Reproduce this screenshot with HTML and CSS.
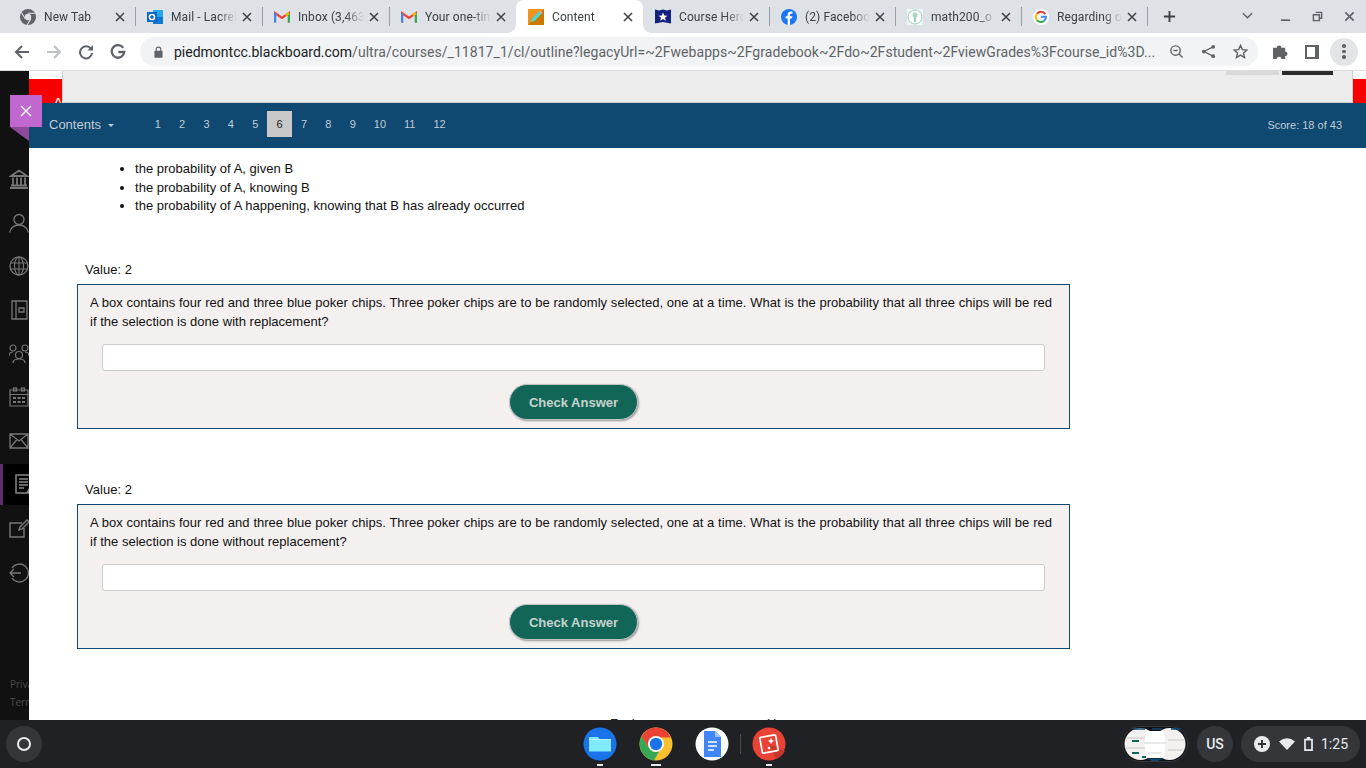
FILE: index.html
```html
<!DOCTYPE html>
<html lang="en">
<head>
<meta charset="utf-8">
<title>Content</title>
<link rel="stylesheet" href="styles.css">
</head>
<body>
<div class="tabstrip">
  <div class="tab"><svg class="fav" viewBox="0 0 16 16"><circle cx="8" cy="8" r="8" fill="#5f6368"/><circle cx="8" cy="8" r="3.2" fill="#dee1e6"/><path d="M8 4.200h7M5 9.500L1.500 3.500M10.800 10L7.200 15.800" stroke="#dee1e6" stroke-width="1.100"/></svg><span class="title">New Tab</span><svg class="x" viewBox="0 0 10 10"><path d="M1 1l8 8M9 1L1 9" stroke="#3c4043" stroke-width="1.500"/></svg></div>
  <div class="tab sep"><svg class="fav" viewBox="0 0 16 16"><rect x="6" y="1" width="10" height="14" fill="#28a8ea"/><rect x="6" y="8" width="10" height="7" fill="#0f78d4"/><rect x="0" y="3" width="10" height="10" fill="#0864c5"/><circle cx="5" cy="8" r="2.600" fill="none" stroke="#fff" stroke-width="1.500"/></svg><span class="title">Mail - Lacrei</span><svg class="x" viewBox="0 0 10 10"><path d="M1 1l8 8M9 1L1 9" stroke="#3c4043" stroke-width="1.500"/></svg></div>
  <div class="tab sep"><svg class="fav" viewBox="0 0 16 16"><path d="M1 13.500V4l7 5 7-5v9.500" fill="none" stroke="#ea4335" stroke-width="2.200"/><path d="M1.100 13.500V4" stroke="#4285f4" stroke-width="2.200"/><path d="M14.900 13.500V4" stroke="#34a853" stroke-width="2.200"/><path d="M14.900 4l-3 2.200" stroke="#fbbc04" stroke-width="2.200"/></svg><span class="title">Inbox (3,463)</span><svg class="x" viewBox="0 0 10 10"><path d="M1 1l8 8M9 1L1 9" stroke="#3c4043" stroke-width="1.500"/></svg></div>
  <div class="tab sep"><svg class="fav" viewBox="0 0 16 16"><path d="M1 13.500V4l7 5 7-5v9.500" fill="none" stroke="#ea4335" stroke-width="2.200"/><path d="M1.100 13.500V4" stroke="#4285f4" stroke-width="2.200"/><path d="M14.900 13.500V4" stroke="#34a853" stroke-width="2.200"/><path d="M14.900 4l-3 2.200" stroke="#fbbc04" stroke-width="2.200"/></svg><span class="title">Your one-time</span><svg class="x" viewBox="0 0 10 10"><path d="M1 1l8 8M9 1L1 9" stroke="#3c4043" stroke-width="1.500"/></svg></div>
  <div class="tab active"><svg class="fav" viewBox="0 0 16 16"><rect width="16" height="16" fill="#f0921e"/><path d="M0 16L16 0v16z" fill="#cc7700"/><path d="M3 13l1-3.500 7-7 2.500 2.500-7 7z" fill="#4fd8d0"/><path d="M11 2.500l2.500 2.500 1-1-2.500-2.500z" fill="#f4a6c8"/></svg><span class="title">Content</span><svg class="x" viewBox="0 0 10 10"><path d="M1 1l8 8M9 1L1 9" stroke="#3c4043" stroke-width="1.500"/></svg></div>
  <div class="tab tight"><svg class="fav" viewBox="0 0 16 16"><path d="M0 0.500l4 1 4-1 4 1 4-1v14l-8-1.500-8 1.500z" fill="#12207f"/><path d="M8 3.500l1.300 2.900 3.100.3-2.400 2 .8 3L8 10.100l-2.800 1.600.8-3-2.400-2 3.100-.3z" fill="#fff"/></svg><span class="title">Course Hero</span><svg class="x" viewBox="0 0 10 10"><path d="M1 1l8 8M9 1L1 9" stroke="#3c4043" stroke-width="1.500"/></svg></div>
  <div class="tab tight sep"><svg class="fav" viewBox="0 0 16 16"><circle cx="8" cy="8" r="8" fill="#1877f2"/><path d="M9 16V9.500h2l.4-2.300H9V6c0-.8.300-1.300 1.400-1.300h1.100V2.600C11 2.500 10.400 2.400 9.800 2.400 8 2.400 6.700 3.500 6.700 5.600v1.600H4.600v2.300h2.100V16z" fill="#fff"/></svg><span class="title">(2) Facebook</span><svg class="x" viewBox="0 0 10 10"><path d="M1 1l8 8M9 1L1 9" stroke="#3c4043" stroke-width="1.500"/></svg></div>
  <div class="tab tight sep"><svg class="fav" viewBox="0 0 16 16"><rect width="16" height="16" fill="#eef6f1"/><circle cx="8" cy="8" r="7" fill="#fff" stroke="#9ccdb8"/><path d="M8 13V7" stroke="#5aa88a" stroke-width="1.200"/><circle cx="8" cy="6" r="2.500" fill="#a5d6c0"/></svg><span class="title">math200_o</span><svg class="x" viewBox="0 0 10 10"><path d="M1 1l8 8M9 1L1 9" stroke="#3c4043" stroke-width="1.500"/></svg></div>
  <div class="tab tight sep"><svg class="fav" viewBox="0 0 16 16"><circle cx="8" cy="8" r="8" fill="#fff"/><path d="M12.300 5.200A5 5 0 0 0 4 4.900" fill="none" stroke="#ea4335" stroke-width="2"/><path d="M4 4.900a5 5 0 0 0 0 6.200" fill="none" stroke="#fbbc04" stroke-width="2"/><path d="M4 11.100a5 5 0 0 0 7.200.6" fill="none" stroke="#34a853" stroke-width="2"/><path d="M11.200 11.700A5 5 0 0 0 13 7.800H8" fill="none" stroke="#4285f4" stroke-width="2"/></svg><span class="title">Regarding of</span><svg class="x" viewBox="0 0 10 10"><path d="M1 1l8 8M9 1L1 9" stroke="#3c4043" stroke-width="1.500"/></svg></div>
  <div class="tab-end">
    <svg class="newtab" viewBox="0 0 14 14"><path d="M7 1v12M1 7h12" stroke="#3c4043" stroke-width="2"/></svg>
  </div>
  <div class="wincontrols">
    <svg class="winicon chev" viewBox="0 0 12 8"><path d="M1 1.500l5 5 5-5" fill="none" stroke="#5f6368" stroke-width="1.500"/></svg>
    <svg class="winicon min" viewBox="0 0 12 12"><path d="M1 10h10" stroke="#5f6368" stroke-width="1.800"/></svg>
    <svg class="winicon max" viewBox="0 0 12 12"><path d="M4 1.500h6.500V8H8M1.500 4H8v6.500H1.500z" fill="none" stroke="#5f6368" stroke-width="1.600"/></svg>
    <svg class="winicon close" viewBox="0 0 12 12"><path d="M1.500 1.500l9 9M10.500 1.500l-9 9" stroke="#5f6368" stroke-width="1.800"/></svg>
  </div>
</div>

<div class="toolbar">
  <svg class="tb" viewBox="0 0 16 16"><path d="M15 8H2M8 2L2 8l6 6" fill="none" stroke="#5f6368" stroke-width="2"/></svg>
  <svg class="tb" viewBox="0 0 16 16"><path d="M1 8h13M8 2l6 6-6 6" fill="none" stroke="#bdc1c6" stroke-width="2"/></svg>
  <svg class="tb" viewBox="0 0 16 16"><path d="M13 5A6 6 0 1 0 14 9" fill="none" stroke="#5f6368" stroke-width="2"/><path d="M9.500 6.500H15V1z" fill="#5f6368"/></svg>
  <svg class="tb last" viewBox="0 0 16 16"><path d="M13.200 3.800A6.300 6.300 0 1 0 14.300 8H8.300" fill="none" stroke="#5f6368" stroke-width="2.300"/></svg>
  <div class="omnibox">
    <svg class="lock" viewBox="0 0 10 13"><rect x="0.500" y="5" width="9" height="8" rx="1" fill="#5f6368"/><path d="M2.500 5.500V3.500a2.500 2.500 0 0 1 5 0v2" fill="none" stroke="#5f6368" stroke-width="1.300"/></svg>
    <div class="url"><span class="host">piedmontcc.blackboard.com</span>/ultra/courses/_11817_1/cl/outline?legacyUrl=~2Fwebapps~2Fgradebook~2Fdo~2Fstudent~2FviewGrades%3Fcourse_id%3D...</div>
    <svg class="omni-i zoomout" viewBox="0 0 16 16"><circle cx="7" cy="7" r="5" fill="none" stroke="#5f6368" stroke-width="1.500"/><path d="M10.500 10.500L14.500 14.500M4.800 7h4.400" stroke="#5f6368" stroke-width="1.500"/></svg>
    <svg class="omni-i" viewBox="0 0 16 16"><circle cx="13" cy="3" r="2" fill="#5f6368"/><circle cx="3" cy="8" r="2" fill="#5f6368"/><circle cx="13" cy="13" r="2" fill="#5f6368"/><path d="M13 3L3 8l10 5" fill="none" stroke="#5f6368" stroke-width="1.400"/></svg>
    <svg class="omni-i" viewBox="0 0 16 16"><path d="M8 1.500l2 4.500 4.800.4-3.600 3.200 1.100 4.800L8 11.900l-4.300 2.500 1.100-4.800L1.200 6.400 6 6z" fill="none" stroke="#5f6368" stroke-width="1.500"/></svg>
  </div>
  <svg class="tb-r ext" viewBox="0 0 16 16"><path d="M0 4h4a2.500 2.500 0 1 1 5 0h4v4a2.500 2.500 0 1 1 0 5v3H9a2.500 2.500 0 1 0-5 0H0z" fill="#5f6368"/></svg>
  <svg class="tb-r panel" viewBox="0 0 14 14"><rect x="1" y="1" width="12" height="12" fill="none" stroke="#5f6368" stroke-width="2"/><rect x="10" y="1" width="3" height="12" fill="#5f6368"/></svg>
  <div class="menu"><i></i><i></i><i></i></div>
</div>

<div class="page">
  <nav class="rail">
    <div class="rail-icons">
      <svg class="ri" viewBox="0 0 20 20"><path d="M2 7L10 1.500 18 7zM4 8.500v7M8 8.500v7M12 8.500v7M16 8.500v7M2 16.500h16M1 19h18" fill="none" stroke="#777" stroke-width="1.800"/></svg>
      <svg class="ri" viewBox="0 0 20 20"><circle cx="10" cy="6.500" r="5" fill="none" stroke="#777" stroke-width="1.300"/><path d="M0.500 19.500C2 14 6 12 10 12s8 2 9.500 7.500" fill="none" stroke="#777" stroke-width="1.300"/></svg>
      <svg class="ri" viewBox="0 0 20 20"><circle cx="10" cy="10" r="9" fill="none" stroke="#777" stroke-width="1.300"/><ellipse cx="10" cy="10" rx="4.500" ry="9" fill="none" stroke="#777" stroke-width="1.100"/><path d="M10 1v18M1.500 7h17M1.500 13h17" stroke="#777" stroke-width="1.100"/></svg>
      <svg class="ri" viewBox="0 0 20 20"><path d="M3 1h15v18H3zM7 1v18M10 8h5v4h-5z" fill="none" stroke="#777" stroke-width="1.300"/></svg>
      <svg class="ri" viewBox="0 0 20 20"><g fill="none" stroke="#777" stroke-width="1.200"><circle cx="4" cy="4" r="3"/><circle cx="16" cy="4" r="3"/><circle cx="10" cy="11" r="3.500"/><path d="M0 12c0-3 2-4 4-4M20 12c0-3-2-4-4-4M4 19c0-3 3-4 6-4s6 1 6 4"/></g></svg>
      <svg class="ri" viewBox="0 0 20 20"><g fill="none" stroke="#777" stroke-width="1.200"><path d="M1 3h18v16H1zM1 7.500h18"/><rect x="4.500" y="1" width="3" height="3"/><rect x="12.500" y="1" width="3" height="3"/></g><path d="M4 10h3v2H4zM8.500 10h3v2h-3zM13 10h3v2h-3zM4 14h3v2H4zM8.500 14h3v2h-3zM13 14h3v2h-3z" fill="#777"/></svg>
      <svg class="ri" viewBox="0 0 20 20"><path d="M1 3h18v14H1zM1 3l9 7 9-7M1 17l7-8.500M19 17l-7-8.500" fill="none" stroke="#777" stroke-width="1.300"/></svg>
      <div class="ri-current"><svg class="ri" viewBox="0 0 20 20"><path d="M1 1h15v18H1zM4 5h9M4 8h9M4 11h9M4 14h5" fill="none" stroke="#888" stroke-width="1.500"/><path d="M11 19l3-5h2v5z" fill="#888"/></svg></div>
      <svg class="ri" viewBox="0 0 20 20"><path d="M13 4H1v14h14V9M10 11l1-3 7-7 2 2-7 7z" fill="none" stroke="#777" stroke-width="1.400"/></svg>
      <svg class="ri" viewBox="0 0 20 20"><path d="M3 5A9 9 0 1 1 3 15M12 10H1M5 6l-4 4 4 4" fill="none" stroke="#777" stroke-width="1.300"/></svg>
    </div>
    <div class="rail-foot"><span>Privacy</span><span>Terms</span></div>
  </nav>
  <main class="main">
    <div class="topstrip">
      <div class="redblock"></div>
      <div class="greyband"></div>
      <div class="redblock right"></div>
      <span class="caret-red">^</span>
      <div class="topbtns"><i class="light"></i><i class="dark"></i></div>
    </div>
    <div class="bluebar">
      <div class="contents">Contents <span class="caret"></span></div>
      <ol class="qnums">
        <li>1</li><li>2</li><li>3</li><li>4</li><li>5</li><li class="cur">6</li><li>7</li><li>8</li><li>9</li><li class="wide">10</li><li class="wide">11</li><li class="wide">12</li>
      </ol>
      <div class="score">Score: 18 of 43</div>
    </div>
    <div class="content">
      <ul class="bullets">
        <li>the probability of A, given B</li>
        <li>the probability of A, knowing B</li>
        <li>the probability of A happening, knowing that B has already occurred</li>
      </ul>
      <section class="question">
        <div class="value">Value: 2</div>
        <div class="qbox">
          <p class="qtext">A box contains four red and three blue poker chips. Three poker chips are to be randomly selected, one at a time. What is the probability that all three chips will be red if the selection is done with replacement?</p>
          <input class="answer" type="text" aria-label="Answer">
          <div class="btnrow"><button class="check" type="button">Check Answer</button></div>
        </div>
      </section>
      <section class="question">
        <div class="value">Value: 2</div>
        <div class="qbox">
          <p class="qtext">A box contains four red and three blue poker chips. Three poker chips are to be randomly selected, one at a time. What is the probability that all three chips will be red if the selection is done without replacement?</p>
          <input class="answer" type="text" aria-label="Answer">
          <div class="btnrow"><button class="check" type="button">Check Answer</button></div>
        </div>
      </section>
      <div class="cutoff"><span class="cut-left">Fusion</span><span>Home</span></div>
    </div>
    <div class="purple-x"><svg viewBox="0 0 12 12"><path d="M1 1l10 10M11 1L1 11" stroke="#fff" stroke-width="1.400"/></svg></div>
  </main>
</div>

<footer class="shelf">
  <div class="launcher"><i></i></div>
  <div class="apps">
    <div class="app"><svg viewBox="0 0 34 34"><circle cx="17" cy="17" r="16.500" fill="#1a73e8"/><path d="M6 10h9l2 2.500h11v12H6z" fill="#80eaff"/><path d="M6 12.500h22" stroke="#b4f2ff" stroke-width="1"/></svg><i></i></div>
    <div class="app"><svg viewBox="0 0 34 34"><circle cx="17" cy="17" r="16.500" fill="#fbc02d"/><path d="M17 .5A16.500 16.500 0 0 0 2.700 9.200L9 20l8-9.500h14.700A16.500 16.500 0 0 0 17 .5z" fill="#ea4335"/><path d="M2.700 9.200A16.500 16.500 0 0 0 15 33.400L22 21l-13-1z" fill="#34a853"/><circle cx="17" cy="17" r="8" fill="#fff"/><circle cx="17" cy="17" r="6.200" fill="#1a73e8"/></svg><i class="long"></i></div>
    <div class="app"><svg viewBox="0 0 34 34"><circle cx="17" cy="17" r="16.500" fill="#fff"/><path d="M9 4h11l6 6v20H9z" fill="#4285f4"/><path d="M20 4l6 6h-6z" fill="#a1c2fa"/><path d="M13 15h9M13 19h9M13 23h6" stroke="#fff" stroke-width="1.500"/></svg></div>
    <div class="divider"></div>
    <div class="app"><svg viewBox="0 0 34 34"><circle cx="17" cy="17" r="16.500" fill="#ea4335"/><path d="M17 17L33 24A16.500 16.500 0 0 1 24 32z" fill="#c5372c"/><rect x="9" y="9" width="16" height="16" rx="1" transform="rotate(-10 17 17)" fill="none" stroke="#fff" stroke-width="1.700"/><path d="M19 11.500v5M16.500 14h5" stroke="#fff" stroke-width="1.500"/><circle cx="17" cy="21" r="1.300" fill="#fff"/></svg><i></i></div>
  </div>
  <div class="tray">
    <svg class="desks" viewBox="0 0 66 36">
      <rect x="0.500" y="0.500" width="65" height="35" rx="17.500" fill="#111" stroke="#35363a"/>
      <circle cx="18.500" cy="18" r="16" fill="#f3f1f0"/>
      <circle cx="47.500" cy="18" r="16" fill="#f3f1f0"/>
      <path d="M11 3h12M30 3h10M49 3h10" stroke="#0f4870" stroke-width="1.500"/>
      <path d="M5 12h26M4 22h28M46 14h16M46 24h16" stroke="#c9c9c9" stroke-width="1"/>
      <path d="M10 15h7M10 27h7M20 31h4" stroke="#126657" stroke-width="2"/>
      <path d="M24 32.500h18L36 35h-6z" fill="#0f4870"/>
      <path d="M25 5h16q5 13 0 27H25q-5-14 0-27z" fill="#fff"/>
      <path d="M22 17h22M26 27h14" stroke="#d4d4d4" stroke-width="1"/>
    </svg>
    <div class="lang">US</div>
    <div class="status">
      <svg class="st" viewBox="0 0 16 16"><circle cx="8" cy="8" r="8" fill="#e8eaed"/><path d="M8 4v8M4 8h8" stroke="#35363a" stroke-width="2"/></svg>
      <svg class="st" viewBox="0 0 16 16"><path d="M0 5.500Q8-1 16 5.500L8 14z" fill="#e8eaed"/></svg>
      <svg class="st batt" viewBox="0 0 10 16"><path d="M3 0h4v2h3v14H0V2h3z" fill="#e8eaed"/><rect x="2" y="4" width="6" height="10" fill="#35363a"/></svg>
      <span class="clock">1:25</span>
    </div>
  </div>
</footer>
</body>
</html>
```
FILE: styles.css
```css
* { box-sizing: border-box; }
html, body { margin: 0; padding: 0; }
body { width: 1366px; height: 768px; overflow: hidden; display: flex; flex-direction: column; font-family: "Liberation Sans", Arial, sans-serif; background: #fff; }

.tabstrip { height: 33px; background: #dee1e6; display: flex; padding-left: 8px; flex: none; }
.tab { width: 127px; height: 33px; flex: none; display: flex; align-items: center; padding-left: 12px; padding-right: 10px; position: relative; font: 12px Roboto, sans-serif; letter-spacing: .1px; color: #3c4043; }
.tab.tight { width: 126px; }
.tab.sep::before { content: ""; position: absolute; left: 0; top: 7px; height: 19px; width: 1px; background: #9aa0a6; }
.tab.active { background: #fff; border-radius: 8px 8px 0 0; }
.tab.active::before, .tab.active::after { content: ""; position: absolute; bottom: 0; width: 8px; height: 8px; }
.tab.active::before { left: -8px; background: radial-gradient(circle at 0 0, transparent 7.500px, #fff 8px); }
.tab.active::after { right: -8px; background: radial-gradient(circle at 100% 0, transparent 7.500px, #fff 8px); }
.fav { width: 16px; height: 16px; flex: none; margin-right: 8px; }
.title { flex: 1; min-width: 0; white-space: nowrap; overflow: hidden; -webkit-mask-image: linear-gradient(90deg, #000 72%, transparent 100%); mask-image: linear-gradient(90deg, #000 72%, transparent 100%); }
.x { flex: none; width: 10px; height: 10px; margin-left: 5px; }
.tab-end { width: 42px; display: flex; align-items: center; padding-left: 15px; border-left: 1px solid #9aa0a6; height: 19px; margin-top: 7px; flex: none; }
.newtab { width: 13px; height: 13px; flex: none; }
.wincontrols { margin-left: auto; display: flex; align-items: center; padding-right: 11px; }
.winicon { width: 11px; height: 11px; flex: none; margin-right: 21px; }
.winicon.chev { margin-right: 27px; margin-top: -3px; }
.winicon.close { margin-right: 0; }

.toolbar { height: 38px; flex: none; background: #fff; border-bottom: 1px solid #dadce0; display: flex; align-items: center; padding-left: 14px; }
.tb { width: 16px; height: 16px; margin-right: 16px; flex: none; }
.tb.last { margin-right: 14px; }
.omnibox { width: 1118px; height: 29px; flex: none; background: #f1f3f4; border-radius: 15px; display: flex; align-items: center; padding-left: 14px; padding-right: 10px; }
.lock { width: 9px; height: 12px; flex: none; margin-right: 11px; }
.url { flex: 1; min-width: 0; white-space: nowrap; overflow: hidden; font: 14px Roboto, sans-serif; letter-spacing: .05px; color: #5f6368; }
.host { letter-spacing: 0; color: #202124; }
.omni-i { width: 15px; height: 15px; flex: none; margin-left: 17px; }
.omni-i.zoomout { margin-left: 11px; }
.tb-r { flex: none; }
.ext { width: 15px; height: 15px; margin-left: 15px; }
.panel { width: 14px; height: 14px; margin-left: 17px; }
.menu { width: 28px; height: 28px; margin-left: 11px; flex: none; border-radius: 50%; background: #e3e4e6; display: flex; flex-direction: column; align-items: center; justify-content: center; gap: 2px; }
.menu i { width: 3.500px; height: 3.500px; border-radius: 50%; background: #5f6368; }

.page { flex: 1; min-height: 0; display: flex; position: relative; }
.rail { width: 29px; flex: none; background: #111; display: flex; flex-direction: column; overflow: hidden; padding-top: 98px; }
.rail-icons { display: flex; flex-direction: column; flex: 1; }
.ri { width: 20px; height: 20px; flex: none; display: block; margin: 0 0 23.700px 9px; }
.ri-current { height: 41px; margin-bottom: 14px; margin-top: -11px; background: #000; border-left: 3px solid #5f2d6e; padding: 10px 0 0 12px; }
.ri-current .ri { margin: 0; }
.rail-foot { font: 10px "Open Sans", sans-serif; color: #4a4a4a; padding: 0 0 11px 10px; display: flex; flex-direction: column; gap: 5px; line-height: 13px; white-space: nowrap; }

.main { flex: 1; min-width: 0; display: flex; flex-direction: column; overflow: hidden; }
.topstrip { height: 32px; flex: none; display: flex; align-items: flex-end; position: relative; background: #fff; overflow: hidden; }
.redblock { width: 33px; height: 24px; background: #f80000; flex: none; }
.redblock.right { width: 13px; }
.greyband { flex: 1; height: 32px; background: #ededed; border: 1px solid #d0d0d0; border-width: 0 1px 1px; }
.caret-red { position: absolute; left: 26px; top: 25px; font: bold 11px "Liberation Sans", sans-serif; color: #fff; }
.topbtns { position: absolute; left: 1197px; top: 0; display: flex; gap: 3px; }
.topbtns i { display: block; height: 4px; width: 53px; background: #d9d9d9; }
.topbtns .dark { width: 51px; background: #2b2b2b; }

.bluebar { height: 45px; flex: none; background: #0f4870; display: flex; align-items: center; padding: 0 24px 3px 20px; color: #c0ccd6; }
.contents { font: 13px "Liberation Sans", sans-serif; width: 96.500px; flex: none; }
.caret { display: inline-block; width: 0; height: 0; border: 3px solid transparent; border-top-color: #c0ccd6; border-bottom: 0; margin-left: 3px; vertical-align: 2px; }
.qnums { list-style: none; margin: 0; padding: 0; display: flex; font: 11px "Liberation Sans", sans-serif; }
.qnums li { width: 24.400px; height: 26px; line-height: 26px; text-align: center; }
.qnums li.wide { width: 29.800px; }
.qnums li.cur { background: #c8c8c8; color: #222; }
.score { margin-left: auto; margin-top: 1px; font: 11px "Liberation Sans", sans-serif; }

.content { flex: 1; min-height: 0; overflow: hidden; padding-left: 48px; font-size: 13px; letter-spacing: .02px; color: #111; }
.bullets { margin: 12px 0 0; padding: 0 0 0 58px; line-height: 18.500px; width: 993px; }
.question { width: 993px; margin-top: 44px; }
.question + .question { margin-top: 51px; }
.value { padding-left: 8px; line-height: 19px; margin-bottom: 5px; }
.qbox { border: 1px solid #0f4870; background: #f4f0ef; height: 145px; padding: 8px 17px 0 12px; }
.qtext { margin: 0; line-height: 19px; text-align: justify; height: 51px; }
.answer { display: block; width: 943px; height: 27px; margin: 0 0 0 12px; border: 1px solid #ccc; border-radius: 3px; background: #fff; }
.btnrow { width: 967px; display: flex; justify-content: center; margin-top: 13px; }
.check { width: 129px; height: 36px; border-radius: 18px; background: #126657; border: 1px solid #c4c4c4; box-shadow: 1px 1px 2px #999; color: #c7d3cf; font: bold 13px "Liberation Sans", sans-serif; padding: 1px 0 0; }
.cutoff { display: flex; margin: 67px 0 0 533px; line-height: 15px; font-size: 13px; color: #222; }
.cut-left { width: 157px; flex: none; }

.purple-x { position: absolute; left: 10px; top: 24px; width: 32px; height: 32px; background: #c068cf; display: flex; align-items: center; justify-content: center; }
.purple-x svg { width: 12px; height: 12px; }
.purple-x::after { content: ""; position: absolute; left: 0; top: 32px; border-top: 14px solid #8e4a9a; border-left: 19px solid transparent; }

.shelf { height: 48px; flex: none; background: #202124; display: flex; align-items: center; position: relative; padding-left: 6px; }
.launcher { width: 36px; height: 36px; border-radius: 50%; background: #35363a; display: flex; align-items: center; justify-content: center; flex: none; }
.launcher i { width: 14px; height: 14px; border: 2px solid #e8eaed; border-radius: 50%; }
.apps { position: absolute; left: 583px; top: 7px; display: flex; gap: 22px; align-items: flex-start; }
.app { width: 34px; height: 41px; display: flex; flex-direction: column; align-items: center; }
.app svg { width: 34px; height: 34px; flex: none; }
.app i { width: 6px; height: 2px; margin-top: 3px; background: #e8eaed; }
.app i.long { width: 10px; }
.divider { width: 1px; height: 20px; margin: 7px -11px 0; background: #4a4b4f; }
.tray { margin-left: auto; display: flex; align-items: center; padding-right: 6px; }
.desks { width: 66px; height: 36px; flex: none; margin-right: 9px; }
.lang { width: 36px; height: 36px; border-radius: 50%; background: #35363a; color: #e8eaed; font: 500 14px Roboto, sans-serif; display: flex; align-items: center; justify-content: center; margin-right: 8px; }
.status { height: 36px; width: 119px; border-radius: 18px; background: #35363a; display: flex; align-items: center; padding-left: 13px; color: #e8eaed; font: 14px Roboto, sans-serif; }
.st { width: 16px; height: 16px; margin-right: 9px; flex: none; }
.batt { width: 9px; height: 14px; margin-right: 8px; }
.clock { white-space: nowrap; }
```
